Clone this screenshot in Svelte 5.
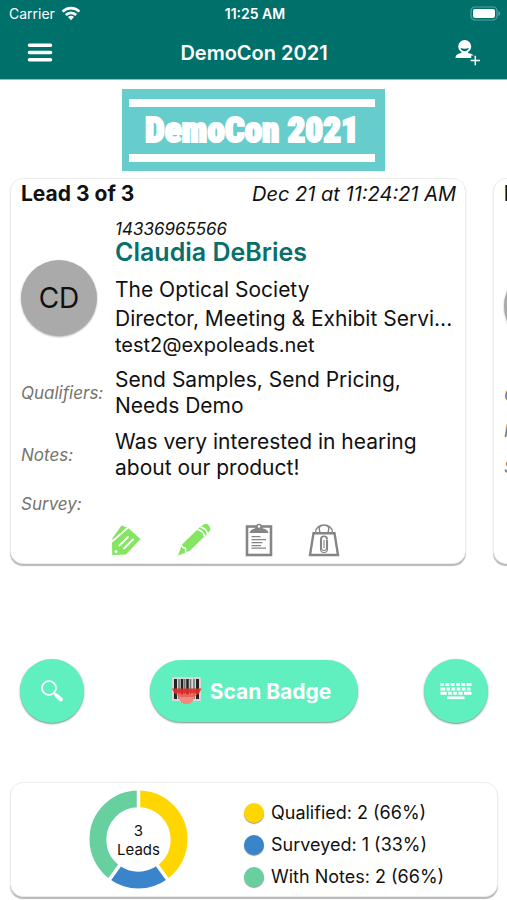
<script>
  const leads = [
    {
      title: 'Lead 3 of 3',
      date: 'Dec 21 at 11:24:21 AM',
      id: '14336965566',
      name: 'Claudia DeBries',
      initials: 'CD',
      company: 'The Optical Society',
      role: 'Director, Meeting & Exhibit Servi...',
      email: 'test2@expoleads.net',
      qualifiers: 'Send Samples, Send Pricing, Needs Demo',
      notes: 'Was very interested in hearing about our product!'
    },
    { title: 'Lead 2 of 3' }
  ];

  const stats = [
    { label: 'Qualified', count: 2, percent: 66, color: '#ffd600' },
    { label: 'Surveyed', count: 1, percent: 33, color: '#3a84cc' },
    { label: 'With Notes', count: 2, percent: 66, color: '#68d09e' }
  ];

  const total = stats.reduce((sum, s) => sum + s.count, 0);
  const radius = 41;
  const around = 2 * Math.PI * radius;

  const point = (turn, r) => {
    const a = turn * 2 * Math.PI;
    return [50 + r * Math.sin(a), 50 - r * Math.cos(a)];
  };

  let seen = 0;
  const slices = stats.map((s) => {
    const slice = {
      color: s.color,
      length: (s.count / total) * around,
      offset: (-seen / total) * around,
      edge: point(seen / total, 50)
    };
    seen += s.count;
    return slice;
  });
</script>

<div class="page">
  <header>
    <div class="status">
      <span class="carrier">
        Carrier
        <svg width="20" height="15" viewBox="0 0 20 15" fill="none" stroke="#fff" stroke-width="2.6">
          <path d="M1.6 5.6a12 12 0 0 1 16.8 0" />
          <path d="M4.8 9a7.4 7.4 0 0 1 10.4 0" />
          <path d="M10 14.2l-3-3.1a4.3 4.3 0 0 1 6 0z" fill="#fff" stroke="none" />
        </svg>
      </span>
      <time>11:25 AM</time>
      <svg class="battery" width="31" height="15" viewBox="0 0 31 15">
        <rect x="1" y="1" width="26" height="13" rx="4" fill="none" stroke="#5aa19e" stroke-width="1.2" />
        <rect x="3" y="3" width="22" height="9" rx="2" fill="#fff" />
        <path d="M28.4 5v5q1.8-.8 1.8-2.5t-1.8-2.5z" fill="#5aa19e" />
      </svg>
    </div>
    <nav>
      <button class="plain" aria-label="Menu">
        <svg width="26" height="20" viewBox="0 0 26 20" stroke="#fff" stroke-width="3.4" stroke-linecap="round">
          <path d="M2.4 2.2h21.2M2.4 9.5h21.2M2.4 16.8h21.2" />
        </svg>
      </button>
      <h1>DemoCon 2021</h1>
      <button class="plain" aria-label="Add lead">
        <svg width="26" height="27" viewBox="0 0 26 27">
          <path d="M.5 19c.2-3.300 2.500-4.500 6-5v-2h6.500v2c3 .500 4.700 1.200 5.600 2.600h-2.400v2.400z" fill="#fff" />
          <circle cx="9.700" cy="7.500" r="6.500" fill="#fff" />
          <path d="M5.500 9c2.400 1 6 1 8.400 0-.8 4.200-7.600 4.200-8.400 0z" fill="#00706b" />
          <path d="M20.300 16.800v9.400M15.600 21.500h9.400" stroke="#fff" stroke-width="1.500" />
        </svg>
      </button>
    </nav>
  </header>

  <main>
    <div class="banner"><span>DemoCon 2021</span></div>

    <div class="carousel">
      {#each leads as lead}
        <article class="card lead">
          <div class="top">
            <h2>{lead.title}</h2>
            {#if lead.date}<em>{lead.date}</em>{/if}
          </div>
          <div class="details">
            <div class="avatar">{lead.initials ?? ''}</div>
            <div class="info" class:empty={!lead.name}>
              {#if lead.name}
                <p class="id">{lead.id}</p>
                <h3>{lead.name}</h3>
                <p class="company">{lead.company}</p>
                <p class="role">{lead.role}</p>
                <p class="email">{lead.email}</p>
              {/if}
            </div>
            <span class="label">Qualifiers:</span>
            <p>{lead.qualifiers ?? ''}</p>
            <span class="label">Notes:</span>
            <p>{lead.notes ?? ''}</p>
            <span class="label">Survey:</span>
            <p></p>
          </div>
          {#if lead.name}
            <div class="tools">
              <button class="plain" aria-label="Qualifiers">
                <svg width="32" height="34" viewBox="0 0 32 34">
                  <path d="M2.500 15L11.500 2.500l5.500 1.800L2.500 17z" fill="#84e563" />
                  <path d="M2 19.500L18.500 5.200 30.500 16 16 31.500 2.200 32z" fill="#84e563" />
                  <path d="M1.500 19.500L18.500 4.800" stroke="#fff" stroke-width="1" />
                  <path d="M9.500 22.500l8.500-8.500M14 25.500l9-9" stroke="#fff" stroke-width="2" stroke-linecap="round" />
                  <circle cx="6" cy="28.500" r="1.500" fill="#fff" />
                </svg>
              </button>
              <button class="plain" aria-label="Notes">
                <svg width="34" height="34" viewBox="0 0 34 34">
                  <path d="M1 32.500L5 21.500 22.500 4.500 27.500 1q2-1 4 1t2 5l-4 4.500L12 28.500z" fill="#84e563" />
                  <path d="M4.500 22q1.500 3.500 3 3t1 2.500 3.500 1.500" fill="none" stroke="#fff" stroke-width="1.400" />
                  <path d="M20.500 6.500q6 1.500 7 7M23.500 4q6 1.500 7 7" fill="none" stroke="#fff" stroke-width="1.500" />
                </svg>
              </button>
              <button class="plain" aria-label="Survey">
                <svg width="28" height="34" viewBox="0 0 28 34">
                  <rect x="2" y="3.500" width="24" height="28.500" fill="none" stroke="#858585" stroke-width="2.600" />
                  <path d="M4.500 10q1-4 5.500-4.500c0-6.500 8-6.500 8 0q4.500.5 5.500 4.500z" fill="#858585" />
                  <circle cx="14" cy="3.500" r="1.300" fill="#fff" />
                  <path d="M6.500 13.700h9M6.500 16.700h14.500M6.500 19.700h11M6.500 22.700h9.500M6.500 25.200h14.500" stroke="#858585" stroke-width="1.200" />
                </svg>
              </button>
              <button class="plain" aria-label="Materials">
                <svg width="32" height="34" viewBox="0 0 32 34" fill="none" stroke="#858585">
                  <path d="M5.500 10.200h21l3.500 21.800H2z" stroke-width="2.400" />
                  <path d="M7.500 9.500c0-10 17-10 17 0M12 9.500c-2-5 0-7.500 4-7.500s6 2.500 4 7.500" stroke-width="1.300" />
                  <path d="M18.500 16.500v8.500a2.500 2.500 0 0 1-5 0v-9a1.500 1.500 0 0 1 5 0M19.500 17v9a3.500 3.500 0 0 1-7 0v-9.500a3.500 3.500 0 0 1 7 0M16 17v8" stroke-width="1.100" />
                </svg>
              </button>
            </div>
          {/if}
        </article>
      {/each}
    </div>

    <div class="actions">
      <button class="round" aria-label="Search">
        <svg width="24" height="24" viewBox="0 0 24 24" fill="none" stroke="#fff">
          <circle cx="9" cy="9" r="7" stroke-width="1.700" />
          <path d="M14 14l2 2" stroke-width="2" />
          <path d="M16.500 16.500l4.500 4" stroke-width="3.800" stroke-linecap="round" />
        </svg>
      </button>
      <button class="scan">
        <svg width="31" height="30" viewBox="0 0 31 30">
          <rect x="1" y="1" width="29" height="24" rx="1" fill="#d7d9d8" />
          <path d="M4.500 3v20M26.500 3v20" stroke="#222" stroke-width="3" />
          <path d="M11 3v20M16.500 3v20" stroke="#222" stroke-width="2.500" />
          <path d="M8 3v20M13.700 3v20M19.500 3v20M23 3v20" stroke="#777" stroke-width="1.600" />
          <path d="M7.500 18.500h16c0 13-16 13-16 0z" fill="#f08a80" />
          <path d="M1 12.500h29.500l-2.500 5H3.500z" fill="#e02f27" opacity=".92" />
          <path d="M4 17.500h24l-5 3.500H9z" fill="#f0564c" opacity=".75" />
        </svg>
        Scan Badge
      </button>
      <button class="round" aria-label="Type in a badge">
        <svg width="32" height="18" viewBox="0 0 32 18" stroke="#fff" fill="none">
          <path d="M.5 2.500h31" stroke-width="3.200" stroke-dasharray="3.200 1.700 3.800 1.500 3.800 1.500 3.800 1.500 3.800 1.500 5.200 9" />
          <path d="M.5 7h31" stroke-width="3" stroke-dasharray="4.600 1.400 3.600 1.500 3.600 1.500 3.600 1.500 3.600 1.500 3.600 1.200" />
          <path d="M.5 11.300h31" stroke-width="3" stroke-dasharray="6.200 1.500 3.600 1.500 3.600 1.500 4.200 1.500 7.400 9" />
          <path d="M7 15.800h17.500" stroke-width="2.600" />
        </svg>
      </button>
    </div>

    <section class="card stats">
      <div class="chart">
        <svg viewBox="0 0 100 100">
          {#each slices as s}
            <circle
              cx="50"
              cy="50"
              r={radius}
              fill="none"
              stroke={s.color}
              stroke-width="17"
              stroke-dasharray="{s.length} {around}"
              stroke-dashoffset={s.offset}
              transform="rotate(-90 50 50)"
            />
          {/each}
          {#each slices as s}
            <path d="M50 50L{s.edge[0]} {s.edge[1]}" stroke="#fff" stroke-width="3.500" />
          {/each}
        </svg>
        <p>3<br />Leads</p>
      </div>
      <ul>
        {#each stats as s}
          <li><i style="background: {s.color}"></i>{s.label}: {s.count} ({s.percent}%)</li>
        {/each}
      </ul>
    </section>
  </main>
</div>

<style>
  :global(body) {
    margin: 0;
    background: #fff;
  }

  .page {
    font-family: Inter, 'Liberation Sans', sans-serif;
    color: #111;
    overflow: hidden;
  }

  h1, h2, h3, p, ul {
    margin: 0;
    padding: 0;
  }

  svg {
    display: block;
  }

  button {
    font: inherit;
    border: 0;
    padding: 0;
    cursor: pointer;
  }

  .plain {
    background: none;
  }

  header {
    background: #00706b;
    color: #fff;
    border-bottom: 1px solid #8fc0c0;
  }

  .status {
    display: grid;
    grid-template-columns: 1fr auto 1fr;
    align-items: center;
    height: 26px;
    padding: 0 6px 0 9px;
    font-size: 14px;
  }

  .carrier {
    display: flex;
    align-items: center;
    gap: 6px;
  }

  time {
    font-weight: 600;
  }

  .battery {
    justify-self: end;
  }

  nav {
    display: flex;
    align-items: center;
    justify-content: space-between;
    height: 53px;
    padding: 0 26px 0 27px;
  }

  h1 {
    font-size: 20px;
    font-weight: 600;
  }

  .banner {
    width: 52%;
    height: 82px;
    margin: 9px auto 0;
    padding: 10px 10px 9px 7px;
    box-sizing: border-box;
    background: #66cccc;
  }

  .banner span {
    display: flex;
    align-items: center;
    justify-content: center;
    height: 100%;
    box-sizing: border-box;
    border: solid #fff;
    border-width: 8px 0;
    color: #fff;
    font: 900 35px/46px Impact, 'Roboto Condensed', 'Liberation Sans', sans-serif;
    -webkit-text-stroke: 2px #fff;
    white-space: nowrap;
  }

  .carousel {
    display: flex;
    gap: 27px;
    padding: 7px 10px 10px;
    overflow: hidden;
  }

  .card {
    background: #fff;
    border: 1px solid #ececec;
    border-radius: 13px;
    box-shadow: 0 2px 1px #b8b8b8;
    box-sizing: border-box;
  }

  .lead {
    flex: 0 0 calc(100% - 31px);
    padding: 2px 9px 6px 10px;
  }

  .top {
    display: flex;
    justify-content: space-between;
    align-items: center;
    margin-bottom: 12px;
    line-height: 26px;
    font-size: 20px;
    white-space: nowrap;
  }

  h2 {
    font-size: 21px;
    font-weight: 700;
  }

  .details {
    display: grid;
    grid-template-columns: 84px 1fr;
    gap: 10px;
    align-items: center;
    font-size: 21px;
    line-height: 26px;
  }

  .details p {
    min-height: 26px;
  }

  .avatar {
    width: 76px;
    height: 76px;
    margin-top: 20px;
    border-radius: 50%;
    background: #aaa;
    box-shadow: 0 1px 2px #aaa;
    font-size: 28px;
    line-height: 76px;
    text-align: center;
  }

  .info {
    white-space: nowrap;
  }

  .info.empty {
    height: 153px;
  }

  .info p {
    min-height: 0;
  }

  .info .id {
    font-size: 17px;
    font-style: italic;
    line-height: 20px;
  }

  h3 {
    margin-bottom: 10px;
    color: #08706b;
    font-size: 25px;
    font-weight: 600;
    line-height: 26px;
  }

  .company {
    line-height: 30px;
  }

  .role {
    line-height: 28px;
  }

  .email {
    font-size: 20px;
    line-height: 24px;
  }

  .label {
    color: #74746c;
    font-size: 17px;
    font-style: italic;
  }

  .tools {
    display: flex;
    justify-content: space-between;
    width: 230px;
    margin: 6px 0 0 89px;
  }

  .actions {
    display: flex;
    justify-content: space-between;
    align-items: center;
    margin-top: 85px;
    padding: 0 19px 0 20px;
  }

  .round,
  .scan {
    display: flex;
    align-items: center;
    justify-content: center;
    height: 62px;
    border-radius: 32px;
    background: #60f0c0;
    box-shadow: 0 1px 2px #6f8f82;
    color: #fff;
  }

  .round {
    width: 64px;
    height: 64px;
  }

  .scan {
    gap: 8px;
    width: 208px;
    padding-right: 6px;
    font-size: 21px;
    font-weight: 700;
  }

  .stats {
    display: flex;
    align-items: center;
    gap: 56px;
    height: 115px;
    margin: 59px 9px 3px 10px;
    padding-left: 78px;
    white-space: nowrap;
  }

  .chart {
    display: grid;
    place-items: center;
    width: 99px;
    font-size: 15px;
    line-height: 19px;
    text-align: center;
  }

  .chart > * {
    grid-area: 1 / 1;
  }

  .chart svg {
    width: 99px;
  }

  ul {
    padding-top: 10px;
    list-style: none;
    font-size: 18px;
    line-height: 32px;
  }

  li {
    display: flex;
    align-items: center;
    gap: 7px;
  }

  li i {
    width: 20px;
    height: 20px;
    border-radius: 50%;
    box-shadow: 0 1px 1px #999;
  }
</style>
